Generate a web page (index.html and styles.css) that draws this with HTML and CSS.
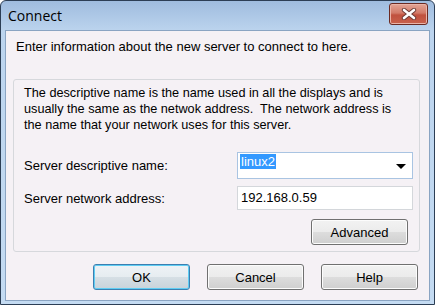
FILE: index.html
```html
<!DOCTYPE html>
<html lang="en">
<head>
  <meta charset="UTF-8" />
  <title>Connect</title>
  <link rel="stylesheet" href="styles.css">
</head>
<body>
  <div class="window">
    <!-- Title bar -->
    <div class="titlebar">
      <span class="title">Connect</span>
      <button class="close" aria-label="Close">
        <svg width="16" height="12" viewBox="0 0 16 12">
          <path d="M3 2 L13 10 M13 2 L3 10" stroke="#6a3a34" stroke-width="4.4" stroke-linecap="round"/>
          <path d="M3 2 L13 10 M13 2 L3 10" stroke="#fff" stroke-width="2.6" stroke-linecap="round"/>
        </svg>
      </button>
    </div>
    <!-- Dialog body -->
    <div class="client">
      <p class="intro">Enter information about the new server to connect to here.</p>
      <div class="group">
        <p class="desc">The descriptive name is the name used in all the displays and is usually the same as the netwok address.&nbsp; The network address is the name that your network uses for this server.</p>
        <div class="row">
          <label>Server descriptive name:</label>
          <div class="combo">
            <span class="sel">linux2</span>
            <span class="arrow"></span>
          </div>
        </div>
        <div class="row">
          <label>Server network address:</label>
          <div class="field">192.168.0.59</div>
        </div>
        <div class="adv-row">
          <button class="btn">Advanced</button>
        </div>
      </div>
      <div class="buttons">
        <button class="btn default">OK</button>
        <button class="btn">Cancel</button>
        <button class="btn">Help</button>
      </div>
    </div>
  </div>
</body>
</html>
```

FILE: styles.css
```css
html, body { margin: 0; padding: 0; }
body {
  width: 435px;
  height: 305px;
  background: #fff;
  font-family: "Liberation Sans", Arial, sans-serif;
  font-size: 13px;
  color: #000;
  overflow: hidden;
}
.window {
  box-sizing: border-box;
  width: 435px;
  height: 305px;
  border: 1px solid #2c3e55;
  border-radius: 6px 6px 0 0;
  background: linear-gradient(#9fbcdf, #bcd4ee 30px, #c4dbf2);
  padding: 0 4px 3px 4px;
  display: flex;
  flex-direction: column;
}
/* Title bar */
.titlebar {
  height: 29px;
  display: flex;
  align-items: center;
  justify-content: space-between;
  padding: 0 2px 0 3px;
}
.title { font-family: "Open Sans", "Liberation Sans", sans-serif; font-size: 14px; color: #000; }
.close {
  width: 39px;
  height: 22px;
  margin-top: -3px;
  padding: 0;
  border: 1px solid #6b2a22;
  border-radius: 3px;
  background: linear-gradient(#e3a596, #d27a68 45%, #c0513e 55%, #c8614c);
  box-shadow: inset 0 0 0 1px #eab3a7;
  display: flex;
  align-items: center;
  justify-content: center;
}
/* Client area */
.client {
  flex: 1;
  background: #f5f1f5;
  border: 1px solid #8aa4c2;
  padding: 0 9px 0 7px;
  display: flex;
  flex-direction: column;
}
.intro { margin: 8px 0 0 3px; line-height: 16px; }
.group {
  margin-top: 24px;
  height: 173px;
  box-sizing: border-box;
  border: 1px solid #d6d8dc;
  border-radius: 3px;
  padding: 5px 6px 0 10px;
}
.desc { margin: 0 14px 0 0; line-height: 16px; font-size: 12.7px; }
.row {
  display: flex;
  align-items: center;
  justify-content: space-between;
  margin-top: 7px;
}
.row:first-of-type { margin-top: 19px; }
.combo {
  box-sizing: border-box;
  width: 176px;
  height: 27px;
  border: 1px solid #a9c4e2;
  background: #fff;
  display: flex;
  align-items: flex-start;
  justify-content: space-between;
  padding: 1px 6px 0 2px;
}
.sel {
  background: #3399ff;
  color: #fff;
  line-height: 15px;
  padding: 0 1px;
}
.arrow {
  margin-top: 10px;
  border-left: 5px solid transparent;
  border-right: 5px solid transparent;
  border-top: 5px solid #000;
}
.field {
  box-sizing: border-box;
  width: 176px;
  height: 24px;
  border: 1px solid #d4d7db;
  background: #fff;
  padding: 3px 3px;
  line-height: 16px;
}
.adv-row { display: flex; justify-content: flex-end; margin-top: 9px; padding-right: 5px; }
.btn {
  box-sizing: border-box;
  width: 97px;
  height: 26px;
  font-family: "Liberation Sans", Arial, sans-serif;
  font-size: 13px;
  color: #000;
  border: 1px solid #707070;
  border-radius: 3px;
  background: linear-gradient(#f2f2f2, #ebebeb 50%, #dddddd 50%, #cfcfcf);
  box-shadow: inset 0 0 0 1px #fcfcfc;
  padding: 0;
}
.btn.default {
  border-color: #3c7fb1;
  box-shadow: inset 0 0 0 1px #5fcdf3;
  background: linear-gradient(#eef3f6, #e6ecf0 50%, #d6dfe5 50%, #c9d3da);
}
.buttons {
  display: flex;
  justify-content: flex-end;
  gap: 17px;
  margin-top: 12px;
  padding-right: 2px;
}
```
